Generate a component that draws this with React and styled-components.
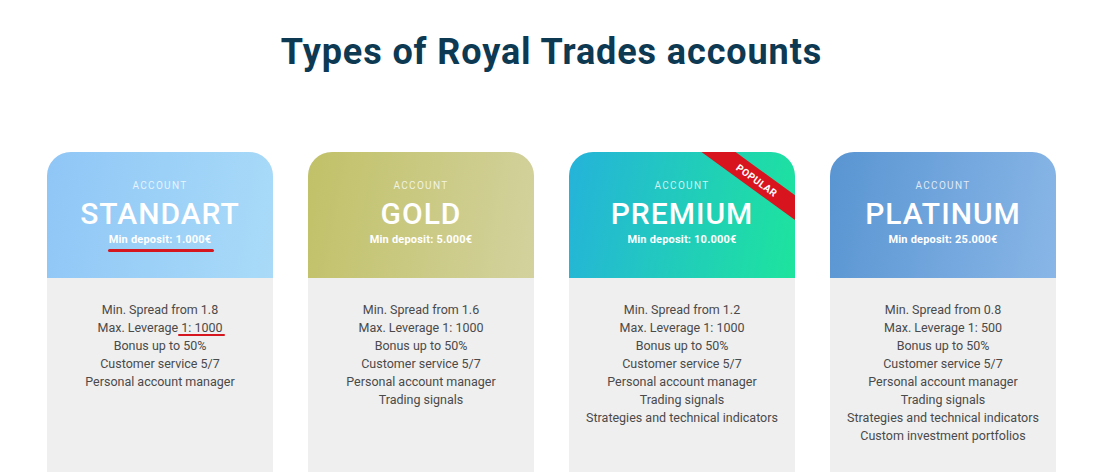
import React from 'react'
import styled, { createGlobalStyle } from 'styled-components'

const GlobalStyle = createGlobalStyle`
  html, body {
    margin: 0;
    padding: 0;
    background: #ffffff;
    overflow: hidden;
  }
  * {
    box-sizing: border-box;
  }
`

const Page = styled.div`
  height: 100vh;
  display: flex;
  flex-direction: column;
  align-items: center;
  font-family: Roboto, 'Liberation Sans', sans-serif;
  padding: 31px 0 0 5px;
`

const Title = styled.h2`
  margin: 0;
  font-size: 36px;
  line-height: 42px;
  font-weight: 700;
  color: #0d3953;
  letter-spacing: 0.9px;
`

const Cards = styled.div`
  flex: 1;
  display: grid;
  grid-template-columns: repeat(4, 226px);
  column-gap: 35px;
  margin-top: 79px;
`

const Card = styled.div`
  display: flex;
  flex-direction: column;
  border-radius: 24px 24px 0 0;
  overflow: hidden;
  background: #efefef;
`

const Header = styled.div`
  position: relative;
  height: 126px;
  display: flex;
  flex-direction: column;
  align-items: center;
  padding-top: 28px;
  color: #ffffff;
  background: ${p => p.$bg};
`

const Label = styled.div`
  font-size: 10px;
  line-height: 12px;
  letter-spacing: 1.3px;
  color: rgba(255, 255, 255, 0.78);
`

const Name = styled.div`
  margin-top: 5px;
  font-size: 30px;
  line-height: 34px;
  font-weight: 500;
  letter-spacing: 1px;
`

const Deposit = styled.div`
  margin-top: 2px;
  font-size: 11px;
  line-height: 14px;
  font-weight: 700;
  letter-spacing: 0.2px;
`

const Marked = styled.span`
  position: relative;

  &::after {
    content: '';
    position: absolute;
    left: ${p => p.$left}px;
    right: ${p => p.$right}px;
    bottom: ${p => p.$bottom}px;
    height: ${p => p.$thick}px;
    border-radius: 2px;
    background: #d5161f;
  }
`

const Ribbon = styled.div`
  position: absolute;
  top: 18px;
  right: -37px;
  width: 150px;
  height: 20px;
  background: #d8151f;
  transform: rotate(36deg);
  display: flex;
  align-items: center;
  justify-content: center;
  font-size: 10px;
  font-weight: 700;
  letter-spacing: 0.4px;
  color: #ffffff;
`

const Features = styled.ul`
  list-style: none;
  margin: 0;
  padding: 23px 0 0;
  text-align: center;
  font-size: 12.5px;
  line-height: 18px;
  color: #4a4a4a;
`

const accounts = [
  {
    name: 'STANDART',
    deposit: '1.000€',
    bg: 'linear-gradient(100deg, #8fc6f6 0%, #a9dbf8 100%)',
    marked: true,
    features: [
      'Min. Spread from 1.8',
      'Max. Leverage 1: 1000',
      'Bonus up to 50%',
      'Customer service 5/7',
      'Personal account manager',
    ],
  },
  {
    name: 'GOLD',
    deposit: '5.000€',
    bg: 'linear-gradient(100deg, #c1c168 0%, #d3d29e 100%)',
    features: [
      'Min. Spread from 1.6',
      'Max. Leverage 1: 1000',
      'Bonus up to 50%',
      'Customer service 5/7',
      'Personal account manager',
      'Trading signals',
    ],
  },
  {
    name: 'PREMIUM',
    deposit: '10.000€',
    bg: 'linear-gradient(100deg, #25b3da 0%, #1de49d 100%)',
    popular: true,
    features: [
      'Min. Spread from 1.2',
      'Max. Leverage 1: 1000',
      'Bonus up to 50%',
      'Customer service 5/7',
      'Personal account manager',
      'Trading signals',
      'Strategies and technical indicators',
    ],
  },
  {
    name: 'PLATINUM',
    deposit: '25.000€',
    bg: 'linear-gradient(100deg, #5995d2 0%, #89b6e7 100%)',
    features: [
      'Min. Spread from 0.8',
      'Max. Leverage 1: 500',
      'Bonus up to 50%',
      'Customer service 5/7',
      'Personal account manager',
      'Trading signals',
      'Strategies and technical indicators',
      'Custom investment portfolios',
    ],
  },
]

const renderFeature = (text, marked) => {
  if (marked && text.startsWith('Max. Leverage')) {
    return (
      <>
        Max. Leverage <Marked $left={-3} $right={-2} $bottom={-1} $thick={2}>1: 1000</Marked>
      </>
    )
  }
  return text
}

const App = () => {
  return (
    <Page>
      <GlobalStyle />
      <Title>Types of Royal Trades accounts</Title>
      <Cards>
        {accounts.map(acc => (
          <Card key={acc.name}>
            <Header $bg={acc.bg}>
              <Label>ACCOUNT</Label>
              <Name>{acc.name}</Name>
              <Deposit>
                {acc.marked ? (
                  <Marked $left={-1} $right={-3} $bottom={-6} $thick={3}>
                    Min deposit: {acc.deposit}
                  </Marked>
                ) : (
                  <>Min deposit: {acc.deposit}</>
                )}
              </Deposit>
              {acc.popular && <Ribbon>POPULAR</Ribbon>}
            </Header>
            <Features>
              {acc.features.map(f => (
                <li key={f}>{renderFeature(f, acc.marked)}</li>
              ))}
            </Features>
          </Card>
        ))}
      </Cards>
    </Page>
  )
}

export default App
